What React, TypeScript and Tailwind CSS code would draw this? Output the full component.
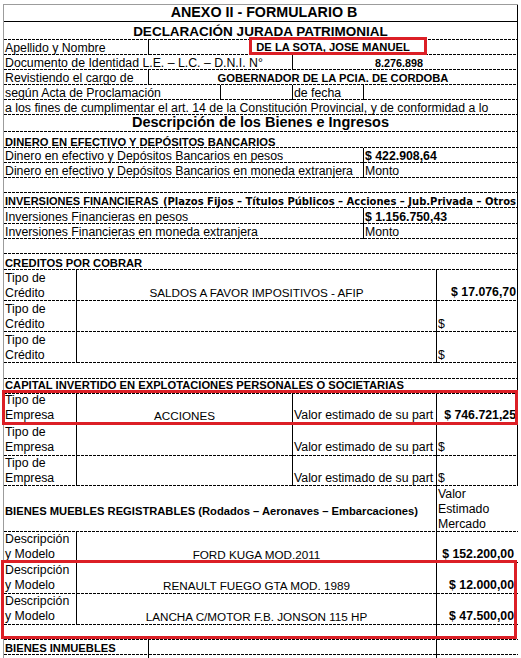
import React from "react";

const DASH =
  "bg-[image:repeating-linear-gradient(90deg,#000_0_3px,transparent_3px_4px)] bg-[length:100%_1px] bg-bottom bg-no-repeat";

const REG = "text-[12.3px] leading-[13px]";
const REG2 = "text-[12.3px] leading-[15px] whitespace-normal";
const REG2N = "text-[12.3px] leading-[15px]";
const UPR = "text-[11.7px] leading-[15px]";
const BH = "font-bold text-[11.2px] leading-[12px]";
const VAL = "font-bold text-[12.3px] leading-[13px]";
const VAL2 = "font-bold text-[12.3px] leading-[15px]";

type P = { className?: string; children?: React.ReactNode; center?: boolean };

function C({ className = "", children, center = false }: P) {
  return (
    <div
      className={`flex h-full overflow-hidden whitespace-nowrap ${center ? "items-center" : "items-end"} ${DASH} ${className}`}
    >
      {children}
    </div>
  );
}

function R({ className = "", children }: P) {
  return <div className={`flex ${className}`}>{children}</div>;
}

function TwoLine({ a, b }: { a: string; b: string }) {
  return (
    <span className={REG2}>
      {a}
      <br />
      {b}
    </span>
  );
}

function EmpresaRow({ h, pb, first }: { h: string; pb: string; first?: boolean }) {
  return (
    <R className={`${h} border-r border-black`}>
      <C className={`w-[72px] pl-px ${pb}`}>
        <TwoLine a="Tipo de" b="Empresa" />
      </C>
      <C className={`w-[216px] justify-center border-l border-black ${pb}`}>
        {first ? <span className={UPR}>ACCIONES</span> : null}
      </C>
      <C className={`w-[144px] border-l border-black pl-px ${pb}`}>
        <span className={REG2N}>Valor estimado de su part</span>
      </C>
      {first ? (
        <C className={`flex-1 justify-end border-l border-black pr-px ${pb}`}>
          <span className={VAL2}>$ 746.721,25</span>
        </C>
      ) : (
        <C className={`flex-1 border-l border-black pl-px ${pb}`}>
          <span className={REG2N}>$</span>
        </C>
      )}
    </R>
  );
}

function CreditoRow({ first }: { first?: boolean }) {
  return (
    <R className="h-[31px] border-r border-black">
      <C className="w-[72px] pl-px">
        <TwoLine a="Tipo de" b="Crédito" />
      </C>
      <C className="w-[360px] justify-center border-l border-black pb-px">
        {first ? <span className={UPR}>SALDOS A FAVOR IMPOSITIVOS - AFIP</span> : null}
      </C>
      {first ? (
        <C className="flex-1 justify-end border-l border-black pr-px pb-px">
          <span className={VAL2}>$ 17.076,70</span>
        </C>
      ) : (
        <C className="flex-1 border-l border-black pl-px">
          <span className={REG2N}>$</span>
        </C>
      )}
    </R>
  );
}

function MuebleRow({ desc, value }: { desc: string; value: string }) {
  return (
    <R className="h-[31px]">
      <C className="w-[72px] pl-px pb-px">
        <TwoLine a="Descripción" b="y Modelo" />
      </C>
      <C className="w-[360px] justify-center border-l border-black pb-px">
        <span className={UPR}>{desc}</span>
      </C>
      <C className="flex-1 justify-end border-l border-black pr-[4px] pb-px">
        <span className={VAL2}>{value}</span>
      </C>
    </R>
  );
}

export default function App() {
  return (
    <div className="relative h-[658px] w-[521px] overflow-hidden bg-white font-['Liberation_Sans',Arial,sans-serif] text-black">
      <div className="ml-[3px] mt-[4px] w-[515px] border-l border-t border-[#9c9c9c]">
        {/* ANEXO */}
        <div className="flex h-[17px] items-end justify-center border-b border-r border-black pl-[7px]">
          <span className="font-bold text-[14.3px] leading-[17px]">ANEXO II - FORMULARIO B</span>
        </div>
        <R className="h-[18px] border-r border-black">
          <C className="flex-1 justify-center">
            <span className="font-bold text-[13.5px] leading-[16px]">DECLARACIÓN JURADA PATRIMONIAL</span>
          </C>
        </R>
        <R className="h-[15px] border-r border-black">
          <C className="w-[144px] pl-px">
            <span className={REG}>Apellido y Nombre</span>
          </C>
          <C className="flex-1 justify-center border-l border-black pb-[2px]">
            <span className={BH}>DE LA SOTA, JOSE MANUEL</span>
          </C>
        </R>
        <R className="h-[15px] border-r border-black">
          <C className="w-[288px] pl-px">
            <span className={REG}>Documento de Identidad L.E. – L.C. – D.N.I. N°</span>
          </C>
          <C className="flex-1 justify-center border-l border-black pr-3 pb-px">
            <span className="font-bold text-[10.8px] leading-[12px]">8.276.898</span>
          </C>
        </R>
        <R className="h-[15px] border-r border-black">
          <C className="w-[144px] pl-px">
            <span className={REG}>Revistiendo el cargo de</span>
          </C>
          <C className="flex-1 justify-center border-l border-black pb-px">
            <span className={BH}>GOBERNADOR DE LA PCIA. DE CORDOBA</span>
          </C>
        </R>
        <R className="h-[15px] border-r border-black">
          <C className="w-[216px] pl-px">
            <span className={REG}>según Acta de Proclamación</span>
          </C>
          <C className="w-[72px] border-l border-black" />
          <C className="w-[71px] border-l border-black pl-px">
            <span className={REG}>de fecha</span>
          </C>
          <C className="flex-1 border-l border-black" />
        </R>
        <R className="h-[15px] border-r border-black">
          <C className="flex-1 pl-px">
            <span className={REG}>
              a los fines de cumplimentar el art. 14 de la Constitución Provincial, y de conformidad a lo
            </span>
          </C>
        </R>
        <R className="h-[17px] border-r border-black">
          <C className="flex-1 justify-center pb-[2px]">
            <span className="font-bold text-[14.5px] leading-[16px]">Descripción de los Bienes e Ingresos</span>
          </C>
        </R>

        {/* DINERO */}
        <R className="h-[16px] border-r border-black">
          <C className="flex-1 pl-px">
            <span className={BH}>DINERO EN EFECTIVO Y DEPÓSITOS BANCARIOS</span>
          </C>
        </R>
        <R className="h-[15px] border-r border-black">
          <C className="w-[359px] pl-px">
            <span className={REG}>Dinero en efectivo y Depósitos Bancarios en pesos</span>
          </C>
          <C className="flex-1 border-l border-black pl-px">
            <span className={VAL}>$ 422.908,64</span>
          </C>
        </R>
        <R className="h-[15px] border-r border-black">
          <C className="w-[359px] pl-px">
            <span className={REG}>Dinero en efectivo y Depósitos Bancarios en moneda extranjera</span>
          </C>
          <C className="flex-1 border-l border-black pl-px">
            <span className={REG}>Monto</span>
          </C>
        </R>
        <R className="h-[15px] border-r border-black">
          <C className="flex-1" />
        </R>

        {/* INVERSIONES */}
        <R className="h-[15px] border-r border-black">
          <C className="flex-1 pl-px">
            <span className="leading-[12px]">
              <span className="font-['Liberation_Sans_Narrow','Liberation_Sans',sans-serif] text-[11px] font-bold">
                INVERSIONES FINANCIERAS
              </span>{" "}
              <span className="font-['DejaVu_Sans',sans-serif] text-[10px] font-bold">
                (Plazos Fijos – Títulos Públicos – Acciones – Jub.Privada – Otros
              </span>
            </span>
          </C>
        </R>
        <R className="h-[16px] border-r border-black">
          <C className="w-[359px] pl-px">
            <span className={REG}>Inversiones Financieras en pesos</span>
          </C>
          <C className="flex-1 border-l border-black pl-px">
            <span className={VAL}>$ 1.156.750,43</span>
          </C>
        </R>
        <R className="h-[15px] border-r border-black">
          <C className="w-[359px] pl-px">
            <span className={REG}>Inversiones Financieras en moneda extranjera</span>
          </C>
          <C className="flex-1 border-l border-black pl-px">
            <span className={REG}>Monto</span>
          </C>
        </R>
        <R className="h-[15px] border-r border-black">
          <C className="flex-1" />
        </R>

        {/* CREDITOS */}
        <R className="h-[16px] border-r border-black">
          <C className="flex-1 pl-px pb-px">
            <span className={BH}>CREDITOS POR COBRAR</span>
          </C>
        </R>
        <CreditoRow first />
        <CreditoRow />
        <CreditoRow />
        <R className="h-[16px] border-r border-black">
          <C className="flex-1" />
        </R>

        {/* CAPITAL */}
        <R className="h-[15px] border-r border-black">
          <C className="flex-1 pl-px pb-[3px]">
            <span className={BH}>CAPITAL INVERTIDO EN EXPLOTACIONES PERSONALES O SOCIETARIAS</span>
          </C>
        </R>
        <EmpresaRow h="h-[31px]" pb="pb-[2px]" first />
        <EmpresaRow h="h-[31px]" pb="pb-[1px]" />
        <EmpresaRow h="h-[30px]" pb="pb-0" />

        {/* BIENES MUEBLES */}
        <R className="h-[46px]">
          <C center className="w-[432px] pl-px pt-[4px]">
            <span className={BH}>BIENES MUEBLES REGISTRABLES (Rodados – Aeronaves – Embarcaciones)</span>
          </C>
          <C className="flex-1 border-l border-black pl-px">
            <span className={REG2}>
              Valor
              <br />
              Estimado
              <br />
              Mercado
            </span>
          </C>
        </R>
        <MuebleRow desc="FORD KUGA MOD.2011" value="$ 152.200,00" />
        <MuebleRow desc="RENAULT FUEGO GTA MOD. 1989" value="$ 12.000,00" />
        <MuebleRow desc="LANCHA C/MOTOR F.B. JONSON 115 HP" value="$ 47.500,00" />
        <R className="h-[15px]">
          <C className="w-[432px]" />
          <C className="flex-1 border-l border-black" />
        </R>

        {/* BIENES INMUEBLES */}
        <R className="h-[15px]">
          <C className="w-[144px] pl-px pb-px">
            <span className={BH}>BIENES INMUEBLES</span>
          </C>
          <C className="w-[288px] border-l border-black" />
          <C className="flex-1 border-l border-black" />
        </R>
        <R className="h-[15px]">
          <C className="w-[144px]" />
          <C className="w-[288px] border-l border-black" />
          <C className="flex-1 border-l border-black" />
        </R>
      </div>

      {/* red highlight boxes */}
      <div className="absolute left-[249px] top-[37px] h-[18px] w-[178px] border-[3px] border-[#dc1f26]" />
      <div className="absolute left-[2px] top-[390px] h-[35px] w-[516px] border-[3px] border-[#dc1f26]" />
      <div className="absolute left-[1px] top-[560px] h-[79px] w-[516px] border-[3px] border-[#dc1f26]" />
    </div>
  );
}
